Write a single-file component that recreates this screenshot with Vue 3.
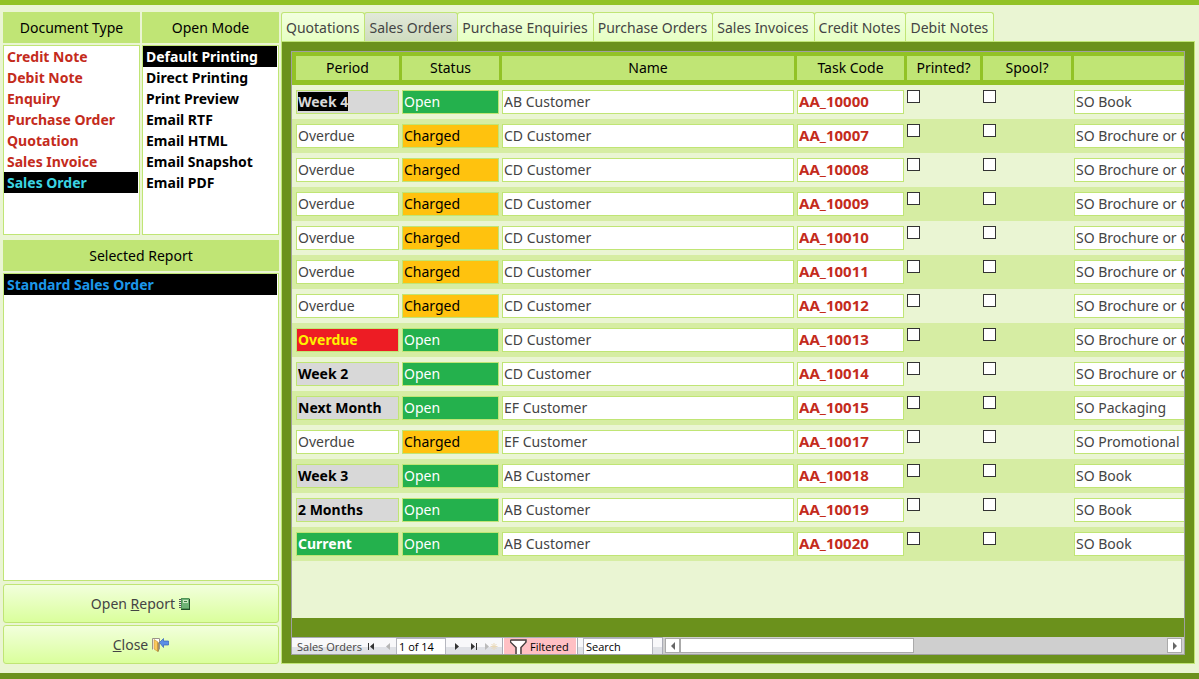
<script setup>
import { ref, onMounted } from 'vue'

const documentTypes = ['Credit Note', 'Debit Note', 'Enquiry', 'Purchase Order', 'Quotation', 'Sales Invoice', 'Sales Order']
const openModes = ['Default Printing', 'Direct Printing', 'Print Preview', 'Email RTF', 'Email HTML', 'Email Snapshot', 'Email PDF']
const reports = ['Standard Sales Order']
const tabs = ['Quotations', 'Sales Orders', 'Purchase Enquiries', 'Purchase Orders', 'Sales Invoices', 'Credit Notes', 'Debit Notes']

const documentType = ref('Sales Order')
const openMode = ref('Default Printing')
const report = ref('Standard Sales Order')
const activeTab = ref('Sales Orders')
const position = ref('1 of 14')
const search = ref('Search')

const toRow = ([period, tone, status, name, code, title]) => ({ period, tone, status, name, code, title, printed: false, spool: false })
const rows = ref([
  ['Week 4', 'soon', 'Open', 'AB Customer', 'AA_10000', 'SO Book'],
  ['Overdue', '', 'Charged', 'CD Customer', 'AA_10007', 'SO Brochure or Catalogue'],
  ['Overdue', '', 'Charged', 'CD Customer', 'AA_10008', 'SO Brochure or Catalogue'],
  ['Overdue', '', 'Charged', 'CD Customer', 'AA_10009', 'SO Brochure or Catalogue'],
  ['Overdue', '', 'Charged', 'CD Customer', 'AA_10010', 'SO Brochure or Catalogue'],
  ['Overdue', '', 'Charged', 'CD Customer', 'AA_10011', 'SO Brochure or Catalogue'],
  ['Overdue', '', 'Charged', 'CD Customer', 'AA_10012', 'SO Brochure or Catalogue'],
  ['Overdue', 'late', 'Open', 'CD Customer', 'AA_10013', 'SO Brochure or Catalogue'],
  ['Week 2', 'soon', 'Open', 'CD Customer', 'AA_10014', 'SO Brochure or Catalogue'],
  ['Next Month', 'soon', 'Open', 'EF Customer', 'AA_10015', 'SO Packaging'],
  ['Overdue', '', 'Charged', 'EF Customer', 'AA_10017', 'SO Promotional'],
  ['Week 3', 'soon', 'Open', 'AB Customer', 'AA_10018', 'SO Book'],
  ['2 Months', 'soon', 'Open', 'AB Customer', 'AA_10019', 'SO Book'],
  ['Current', 'current', 'Open', 'AB Customer', 'AA_10020', 'SO Book']
].map(toRow))

const grid = ref(null)
onMounted(() => {
  const first = grid.value.querySelector('input')
  first.focus()
  first.select()
})
</script>

<template>
  <main class="page">
    <aside class="side">
      <div class="pickers">
        <div class="picker">
          <label class="caption" for="doc-type">Document Type</label>
          <select id="doc-type" v-model="documentType" class="list types" size="7">
            <option v-for="t in documentTypes" :key="t">{{ t }}</option>
          </select>
        </div>
        <div class="picker">
          <label class="caption" for="open-mode">Open Mode</label>
          <select id="open-mode" v-model="openMode" class="list modes" size="7">
            <option v-for="m in openModes" :key="m">{{ m }}</option>
          </select>
        </div>
      </div>
      <label class="caption" for="report">Selected Report</label>
      <select id="report" v-model="report" class="list reports" size="4">
        <option v-for="r in reports" :key="r">{{ r }}</option>
      </select>
      <button class="action" type="button">
        <span>Open <u>R</u>eport</span>
        <svg class="icon" width="12" height="12" viewBox="0 0 12 12" aria-hidden="true">
          <path d="M2 0h8l1 1v11H2z" fill="#4f9457" />
          <path d="M3 1h7v9H3z" fill="#6fb377" />
          <path d="M4 2h5v3H4z" fill="#cbe8c4" />
          <path d="M5 3h3v1H5z" fill="#3c7d42" />
          <path d="M10 1h1v11H2v-1h8z" fill="#23502a" />
          <path d="M0 1.500h2M0 3.500h2M0 5.500h2M0 7.500h2M0 9.500h2" stroke="#555" />
          <path d="M1 2.500h1M1 4.500h1M1 6.500h1M1 8.500h1" stroke="#eef5e8" />
        </svg>
      </button>
      <button class="action" type="button">
        <span><u>C</u>lose</span>
        <svg class="icon" width="17" height="14" viewBox="0 0 17 14" aria-hidden="true">
          <path d="M.5 11.500V.5h7v11" fill="#fff" stroke="#9a9488" />
          <path d="M2 1.500l4 2.500v9.500l-4-2.500z" fill="#fbc95c" stroke="#c28f34" stroke-width=".6" />
          <path d="M6.200 4.500v9" stroke="#6d4a1c" stroke-width=".8" />
          <path d="M7.500 4.500l4-4v2.500h5v4h-5v2.500z" fill="#5b8fe6" stroke="#3460bb" stroke-width=".7" />
        </svg>
      </button>
    </aside>

    <section class="work">
      <nav class="tabs" role="tablist">
        <button v-for="t in tabs" :key="t" class="tab" :class="{ active: t === activeTab }" type="button" role="tab" :aria-selected="t === activeTab" @click="activeTab = t">{{ t }}</button>
      </nav>
      <div class="panel">
        <div class="subform">
          <table ref="grid" class="grid">
            <colgroup>
              <col class="c-period"><col class="c-status"><col class="c-name"><col class="c-code"><col class="c-printed"><col class="c-spool"><col>
            </colgroup>
            <thead>
              <tr>
                <th><div>Period</div></th>
                <th><div>Status</div></th>
                <th><div>Name</div></th>
                <th><div>Task Code</div></th>
                <th><div>Printed?</div></th>
                <th><div>Spool?</div></th>
                <th><div></div></th>
              </tr>
            </thead>
            <tbody>
              <tr v-for="r in rows" :key="r.code">
                <td><input v-model="r.period" class="field" :class="r.tone" type="text" aria-label="Period"></td>
                <td><input v-model="r.status" class="field" :class="r.status.toLowerCase()" type="text" aria-label="Status"></td>
                <td><input v-model="r.name" class="field" type="text" aria-label="Name"></td>
                <td><input v-model="r.code" class="field code" type="text" aria-label="Task Code"></td>
                <td><input v-model="r.printed" class="tick" type="checkbox" aria-label="Printed?"></td>
                <td><input v-model="r.spool" class="tick" type="checkbox" aria-label="Spool?"></td>
                <td><input v-model="r.title" class="field" type="text" aria-label="Title"></td>
              </tr>
            </tbody>
          </table>
          <div class="rest"></div>
          <div class="footer"></div>
          <div class="navbar">
            <div class="records">
              <span class="rec-label">Sales Orders</span>
              <button class="nav" type="button" aria-label="First record">
                <svg width="8" height="8" viewBox="0 0 8 8"><path d="M1 0h1v7H1zM7 0v7L3 3.500z" fill="#333" /></svg>
              </button>
              <button class="nav previous" type="button" aria-label="Previous record">
                <svg width="8" height="8" viewBox="0 0 8 8"><path d="M6 0v7L2 3.500z" fill="#b5b5b5" /></svg>
              </button>
              <input v-model="position" class="position" type="text" aria-label="Current record">
              <button class="nav" type="button" aria-label="Next record">
                <svg width="8" height="8" viewBox="0 0 8 8"><path d="M2 0v7l4-3.500z" fill="#333" /></svg>
              </button>
              <button class="nav last" type="button" aria-label="Last record">
                <svg width="8" height="8" viewBox="0 0 8 8"><path d="M1 0v7l4-3.500zM6 0h1v7H6z" fill="#333" /></svg>
              </button>
              <button class="nav" type="button" aria-label="New record">
                <svg width="13" height="8" viewBox="0 0 13 8"><path d="M0 0v7l4-3.500z" fill="#bbb" /><path d="M9 0v7M5.500 3.500h7M6.500 1l5 5M11.500 1l-5 5" stroke="#ead9b8" /></svg>
              </button>
              <button class="filter" type="button">
                <svg width="17" height="15" viewBox="0 0 17 15"><path d="M.5 1H16v2l-5 5.500V15M.5 1v2L6 8.500V15" fill="none" stroke="#444" stroke-width="1.500" /><path d="M1.500 2H15v1l-5 5v7H7V8L1.500 3z" fill="#fff" /></svg>
                <span>Filtered</span>
              </button>
              <input v-model="search" class="search" type="text" aria-label="Search">
            </div>
            <div class="scroll">
              <button class="arrow" type="button" aria-label="Scroll left">
                <svg width="4" height="8" viewBox="0 0 4 8"><path d="M4 0v8L0 4z" fill="#666" /></svg>
              </button>
              <div class="track"><div class="thumb"></div></div>
              <button class="arrow" type="button" aria-label="Scroll right">
                <svg width="4" height="8" viewBox="0 0 4 8"><path d="M0 0v8l4-4z" fill="#666" /></svg>
              </button>
            </div>
          </div>
        </div>
      </div>
    </section>
  </main>
</template>

<style>
html,
body {
  height: 100%;
}

#app {
  height: 100%;
}
</style>

<style scoped>
.page {
  display: flex;
  gap: 2px;
  box-sizing: border-box;
  min-height: 100%;
  padding: 7px 4px 9px 3px;
  border-top: 5px solid #92c226;
  border-bottom: 6px solid #6b911c;
  background: #eaf5d3;
  color: #444;
  font: 14px/20px "Trebuchet MS", "Noto Sans", sans-serif;
}

input,
button,
select {
  box-sizing: border-box;
  margin: 0;
  font: inherit;
  color: inherit;
  outline: none;
}

.side {
  display: flex;
  flex: 0 0 276px;
  flex-direction: column;
}

.pickers {
  display: flex;
  gap: 2px;
  margin-bottom: 5px;
}

.picker {
  display: flex;
  flex: 1;
  flex-direction: column;
}

.caption {
  flex: none;
  margin-bottom: 2px;
  background: #c0e575;
  color: #000;
  line-height: 31px;
  text-align: center;
}

.list {
  width: 100%;
  height: 190px;
  padding: 0 1px 0 0;
  overflow: hidden;
  border: 1px solid #c0e575;
  border-radius: 0;
  background: #fff;
}

.list option {
  min-height: 20px;
  padding: 1px 3px 0;
  font-weight: bold;
  line-height: 20px;
}

.list option:checked {
  background: linear-gradient(#000, #000);
}

.types option {
  color: #c42b1c;
}

.types option:checked {
  -webkit-text-fill-color: #3bd4e3;
}

.modes option {
  color: #000;
}

.modes option:checked {
  -webkit-text-fill-color: #fff;
}

.reports {
  flex: 1;
  margin-bottom: 3px;
}

.reports option:checked {
  -webkit-text-fill-color: #1c97ea;
}

.action {
  display: flex;
  flex: none;
  align-items: center;
  justify-content: center;
  gap: 4px;
  height: 39px;
  border: 1px solid #c0e575;
  border-radius: 3px;
  background: linear-gradient(#f2ffdc, #daff9c);
}

.action + .action {
  margin-top: 2px;
}

.icon {
  flex: none;
}

.work {
  display: flex;
  flex: 1;
  min-width: 0;
  flex-direction: column;
}

.tabs {
  display: flex;
}

.tab {
  height: 29px;
  padding: 2px 5px 0 4px;
  border: 1px solid #c0e575;
  border-bottom: 0;
  border-radius: 3px 3px 0 0;
  background: linear-gradient(#f2ffdf, #e6ffc3);
  white-space: nowrap;
}

.tab + .tab {
  margin-left: -1px;
}

.tab.active {
  background: linear-gradient(#e2e9da, #cfdcbf);
}

.panel {
  display: flex;
  flex: 1;
  padding: 9px 9px 8px;
  border: 1px solid #c0e575;
  background: #6b911c;
}

.subform {
  display: flex;
  flex: 1;
  min-width: 0;
  flex-direction: column;
  overflow: hidden;
  border: 1px solid #a0a0a0;
}

.grid {
  width: 100%;
  border-collapse: collapse;
  table-layout: fixed;
}

.c-period {
  width: 110px;
}

.c-status {
  width: 100px;
}

.c-name {
  width: 295px;
}

.c-code {
  width: 110px;
}

.c-printed {
  width: 76px;
}

.c-spool {
  width: 91px;
}

th {
  padding: 4px 3px 5px 0;
  background: #92c226;
  color: #000;
  font-weight: normal;
}

th div {
  height: 24px;
  background: #c0e575;
  line-height: 24px;
}

td {
  padding: 5px 3px 5px 0;
  background: #eaf5d3;
  vertical-align: top;
}

tr:nth-child(even) td {
  background: #d6eda3;
}

th:first-child,
td:first-child {
  padding-left: 4px;
}

th:last-child,
td:last-child {
  padding-right: 0;
}

.field {
  display: block;
  width: 100%;
  height: 24px;
  padding: 0 1px 2px;
  border: 1px solid #c0e575;
  border-radius: 0;
  background: #fff;
}

.field::selection {
  background: #000;
  color: #d8d8d8;
}

td:last-child .field {
  padding-right: 0;
  border-right: 0;
}

.soon,
.late,
.current,
.code {
  font-weight: bold;
}

.soon {
  background: #d8d8d8;
  color: #000;
}

.late {
  background: #ed1c24;
  color: #fff200;
}

.current,
.open {
  background: #24b14d;
  color: #fff;
}

.charged {
  background: #ffc20e;
  color: #000;
}

.code {
  color: #c42b1c;
  font-size: 15px;
}

.tick {
  display: block;
  width: 13px;
  height: 13px;
  border: 1px solid #333;
  background: #fff;
  appearance: none;
}

.tick:checked {
  box-shadow: inset 0 0 0 2px #fff;
  background: #333;
}

.rest {
  flex: 1;
  background: #eaf5d3;
}

.footer {
  height: 19px;
}

.navbar {
  display: flex;
  height: 17px;
  font: 11px/15px "Open Sans", sans-serif;
}

.records {
  display: flex;
  flex: 0 0 371px;
  box-sizing: border-box;
  align-items: center;
  border-top: 1px solid #a9abb5;
  border-right: 1px solid #a9abb5;
  background: linear-gradient(#f8f8fa 55%, #dfe1e6 55%);
}

.rec-label {
  width: 70px;
  padding-left: 5px;
  white-space: nowrap;
}

.nav {
  display: flex;
  width: 17px;
  height: 16px;
  padding: 5px 0 0;
  border: 0;
  background: none;
}

.previous {
  width: 12px;
}

.last {
  width: 15px;
}

.position {
  width: 50px;
  height: 16px;
  margin-right: 7px;
  padding: 0 2px;
  border: 1px solid #b5b7bf;
  border-bottom: 0;
  background: #fff;
  color: #000;
}

.filter {
  display: flex;
  align-items: center;
  gap: 3px;
  width: 76px;
  height: 16px;
  padding: 0 7px;
  border: solid #a9abb5;
  border-width: 0 1px;
  box-shadow: inset 1px 0 #fff, inset -1px 0 #fff;
  background: #ffc0c4;
  color: #000;
}

.search {
  width: 70px;
  height: 16px;
  margin-left: 5px;
  padding: 0 2px;
  border: 1px solid #b5b7bf;
  border-bottom: 0;
  background: #fff;
  color: #000;
}

.scroll {
  display: flex;
  flex: 1;
  padding: 1px 2px;
  background: #cfcfcf;
}

.arrow {
  display: flex;
  flex: none;
  align-items: center;
  justify-content: center;
  width: 15px;
  height: 15px;
  padding: 0;
  border: 1px solid #aaa;
  background: #fff;
}

.track {
  flex: 1;
}

.thumb {
  box-sizing: border-box;
  width: 48%;
  height: 15px;
  border: 1px solid #aaa;
  background: #fff;
}
</style>
